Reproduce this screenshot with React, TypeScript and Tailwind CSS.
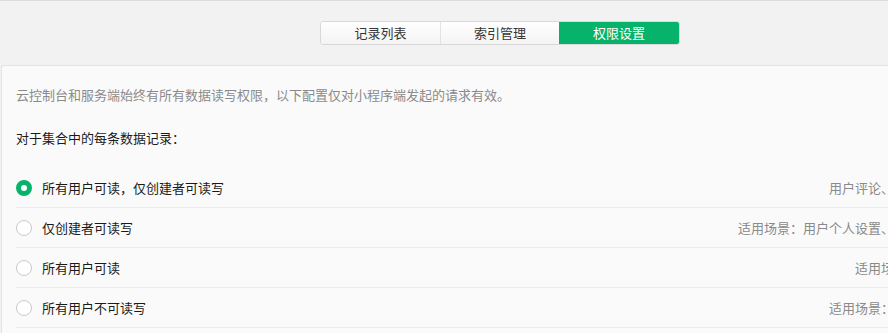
import React from "react";

const tabs = [
  { label: "记录列表", active: false },
  { label: "索引管理", active: false },
  { label: "权限设置", active: true },
];

const options = [
  { label: "所有用户可读，仅创建者可读写", hint: "用户评论、用户公开信息等", checked: true },
  { label: "仅创建者可读写", hint: "适用场景：用户个人设置、用户订单管理等", checked: false },
  { label: "所有用户可读", hint: "适用场景：商品信息等", checked: false },
  { label: "所有用户不可读写", hint: "适用场景：后台流水数据等", checked: false },
];

const Radio = ({ checked }: { checked: boolean }) =>
  checked ? (
    <span className="w-4 h-4 rounded-full border-[5px] border-[#07b36b] bg-white shrink-0" />
  ) : (
    <span className="w-4 h-4 rounded-full border border-[#c9c9c9] bg-white shrink-0" />
  );

const App = (): JSX.Element => {
  return (
    <div className="w-[888px] h-[333px] overflow-hidden bg-[#f2f2f2] border-t border-[#dcdcdc]">
      <div
        className="w-[1000px] text-[13px]"
        style={{ fontFamily: '"Noto Sans CJK SC", "Noto Sans", sans-serif' }}
      >
        <div className="flex justify-center pt-5">
          <div className="flex h-[24px] rounded-[3px] border border-[#d9d9d9] overflow-hidden">
            {tabs.map((t, i) => (
              <div
                key={t.label}
                className={
                  t.active
                    ? "w-[120px] flex items-center justify-center bg-[#07b36b] text-white"
                    : i === 0
                    ? "w-[119px] flex items-center justify-center bg-gradient-to-b from-white to-[#f4f4f4] text-[#353535]"
                    : "w-[119px] flex items-center justify-center bg-gradient-to-b from-white to-[#f4f4f4] text-[#353535] border-l border-[#e2e2e2]"
                }
              >
                {t.label}
              </div>
            ))}
          </div>
        </div>

        <div className="mt-5 ml-px bg-[#fafafa] border-t border-l border-[#e3e3e3] rounded-tl-[3px] pl-[14px] pr-[15px] pt-[19px] h-[300px]">
          <p className="leading-5 text-[#8a8a8a]">
            云控制台和服务端始终有所有数据读写权限，以下配置仅对小程序端发起的请求有效。
          </p>
          <p className="leading-5 text-[#1a1a1a] mt-[23px]">对于集合中的每条数据记录：</p>
          <div className="mt-[20px]">
            {options.map((o) => (
              <div
                key={o.label}
                className="h-10 flex items-center border-b border-[#ececec]"
              >
                <Radio checked={o.checked} />
                <span className="ml-[10px] text-[#1a1a1a]">{o.label}</span>
                <span className="ml-auto text-[#8a8a8a] whitespace-nowrap">{o.hint}</span>
              </div>
            ))}
          </div>
        </div>
      </div>
    </div>
  );
};

export default App;
